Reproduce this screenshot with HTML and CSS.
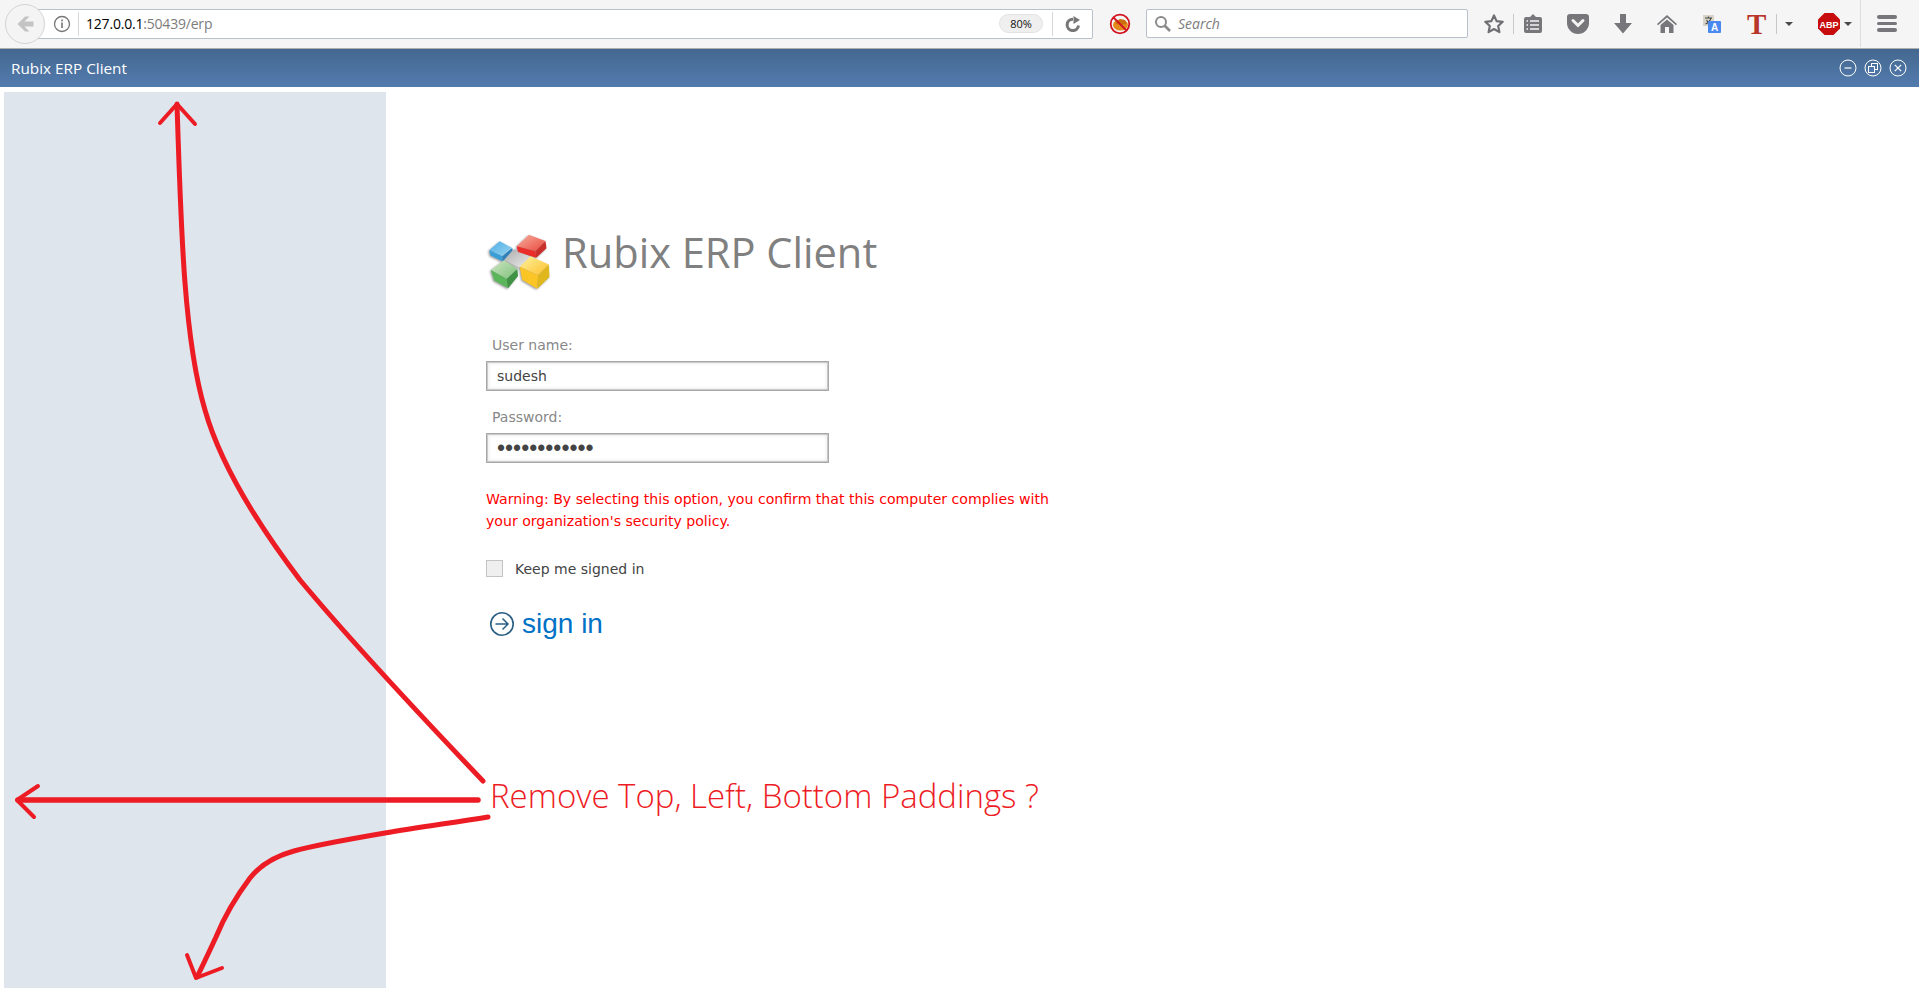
FILE: index.html
```html
<!DOCTYPE html>
<html lang="en">
<head>
  <meta charset="UTF-8" />
  <title>Rubix ERP Client</title>
  <link rel="stylesheet" href="styles.css">
</head>
<body>
  <!-- Browser toolbar -->
  <div class="toolbar">
    <div class="back-btn">
      <svg width="20" height="20" viewBox="0 0 20 20"><path d="M10 2.500 2.500 10l7.500 7.500h4.500l-5-5H18.500v-5H9.500l5-5z" fill="#c4c4c4"/></svg>
    </div>
    <div class="url-bar">
      <svg class="info-icon" width="18" height="18" viewBox="0 0 18 18"><circle cx="9" cy="9" r="7.500" fill="none" stroke="#777" stroke-width="1.300"/><rect x="8.200" y="7.500" width="1.600" height="5.500" fill="#777"/><rect x="8.200" y="4.500" width="1.600" height="1.800" fill="#777"/></svg>
      <span class="url-sep"></span>
      <span class="url-text">127.0.0.1<span class="url-dim">:50439/erp</span></span>
      <span class="zoom-pill">80%</span>
      <span class="url-sep reload-sep"></span>
      <svg class="reload-icon" width="16" height="16" viewBox="0 0 16 16"><path d="M13.500 9.500A5.700 5.700 0 1 1 8 3.200" fill="none" stroke="#777" stroke-width="3"/><path d="M8.500 0v8l6.500-4z" fill="#777"/></svg>
    </div>
    <svg class="noscript-icon" width="22" height="22" viewBox="0 0 22 22">
      <ellipse cx="11.500" cy="12" rx="7.500" ry="5.500" fill="#e58a1c"/>
      <path d="M6 10l5-4 5 1 2 4-7 1z" fill="#c96f10"/>
      <circle cx="11" cy="11" r="9.300" fill="none" stroke="#d0131f" stroke-width="1.800"/>
      <path d="M4.500 4.500l13 13" stroke="#d0131f" stroke-width="1.800"/>
    </svg>
    <div class="search-bar">
      <svg width="18" height="18" viewBox="0 0 18 18"><circle cx="7" cy="7" r="5" fill="none" stroke="#8a8a8a" stroke-width="2"/><path d="M10.500 10.500 16 16" stroke="#8a8a8a" stroke-width="2.600"/></svg>
      <span class="search-text">Search</span>
    </div>
    <svg class="star-icon" width="24" height="24" viewBox="0 0 24 24"><path d="M12 3.500l2.600 5.600 6.100.7-4.500 4.200 1.200 6.100L12 17l-5.400 3.100 1.200-6.100-4.500-4.200 6.100-.7z" fill="none" stroke="#6f6f73" stroke-width="2.200" stroke-linejoin="round"/></svg>
    <span class="tb-sep star-sep"></span>
    <div class="slot slot-first">
      <svg width="20" height="22" viewBox="0 0 20 22"><path d="M3 4h4l3-3 3 3h4a2 2 0 0 1 2 2v12a2 2 0 0 1-2 2H3a2 2 0 0 1-2-2V6a2 2 0 0 1 2-2z" fill="#77777b"/><path d="M7 8h9M7 12h9M7 16h9M3.500 8h1.500M3.500 12h1.500M3.500 16h1.500" stroke="#f5f5f5" stroke-width="1.500"/></svg>
    </div>
    <div class="slot">
      <svg width="22" height="20" viewBox="0 0 22 20"><path d="M3 0h16a3 3 0 0 1 3 3v6a11 11 0 0 1-22 0V3a3 3 0 0 1 3-3z" fill="#77777b"/><path d="M6 6.500l5 5 5-5" fill="none" stroke="#f5f5f5" stroke-width="3" stroke-linecap="round"/></svg>
    </div>
    <div class="slot">
      <svg width="18" height="20" viewBox="0 0 18 20"><path d="M6 0h6v9h6l-9 10.500L0 9h6z" fill="#77777b"/></svg>
    </div>
    <div class="slot">
      <svg width="20" height="18" viewBox="0 0 20 18"><path d="M10 0 0 9l1 1.200L10 2.500l9 7.700L20 9z" fill="#77777b"/><path d="M3.500 10 10 4.500l6.500 5.500v8H12v-6H8v6H3.500z" fill="#77777b"/></svg>
    </div>
    <div class="slot">
      <svg width="20" height="20" viewBox="0 0 20 20">
        <rect x="1" y="1" width="11" height="11" fill="#d8d4c8"/>
        <path d="M3 4h7M6.500 2.500v1.500M9 4c-1 3-3 5-5.500 6M4.500 6c1 2 2.500 3.500 4 4" fill="none" stroke="#444" stroke-width="1.100"/>
        <rect x="6" y="7" width="13" height="12" rx="1" fill="#4a8af0"/>
        <text class="translate-a" x="12.500" y="17" text-anchor="middle">A</text>
      </svg>
    </div>
    <div class="slot slot-t"><span class="t-glyph">T</span></div>
    <span class="tb-sep"></span>
    <div class="slot slot-drop"><span class="caret"></span></div>
    <svg class="abp-icon" width="22" height="22" viewBox="0 0 22 22"><path d="M6.500 0h9L22 6.500v9L15.500 22h-9L0 15.500v-9z" fill="#c70d0d"/><text class="abp-text" x="11" y="14.500" text-anchor="middle">ABP</text></svg>
    <div class="slot slot-caret"><span class="caret"></span></div>
    <span class="tb-sep tb-sep-tall"></span>
    <div class="hamburger"><span></span><span></span><span></span></div>
  </div>

  <!-- App title bar -->
  <div class="titlebar">
    <span class="titlebar-name">Rubix ERP Client</span>
    <div class="window-btns">
      <svg width="18" height="18" viewBox="0 0 18 18"><circle cx="9" cy="9" r="8" fill="none" stroke="#fff"/><path d="M5.500 9h7" stroke="#fff" stroke-width="1.200"/></svg>
      <svg width="18" height="18" viewBox="0 0 18 18"><circle cx="9" cy="9" r="8" fill="none" stroke="#fff"/><rect x="7.500" y="4.500" width="6" height="6" fill="none" stroke="#fff"/><rect x="4.500" y="7.500" width="6" height="6" fill="#4f76a8" stroke="#fff"/></svg>
      <svg width="18" height="18" viewBox="0 0 18 18"><circle cx="9" cy="9" r="8" fill="none" stroke="#fff"/><path d="M5.800 5.800l6.400 6.400M12.200 5.800l-6.400 6.400" stroke="#fff" stroke-width="1.200"/></svg>
    </div>
  </div>

  <main class="content">
    <aside class="sidebar"></aside>
    <section class="login">
      <div class="brand">
        <svg class="brand-logo" width="66" height="57" viewBox="24 20 192 172">
          <defs>
            <linearGradient id="redTop" x1="0" y1="0" x2="1" y2="1"><stop offset="0" stop-color="#f7b0a0"/><stop offset="1" stop-color="#e8483c"/></linearGradient>
            <linearGradient id="blueTop" x1="0" y1="0" x2="1" y2="1"><stop offset="0" stop-color="#4aaee6"/><stop offset="1" stop-color="#9cd4ee"/></linearGradient>
            <linearGradient id="grayTop" x1="0" y1="0" x2="1" y2="1"><stop offset="0" stop-color="#a9a9a9"/><stop offset="1" stop-color="#ededed"/></linearGradient>
            <linearGradient id="greenTop" x1="0" y1="0" x2="1" y2="1"><stop offset="0" stop-color="#cfe6c4"/><stop offset="1" stop-color="#7dc07a"/></linearGradient>
            <linearGradient id="yellowTop" x1="0" y1="0" x2="1" y2="1"><stop offset="0" stop-color="#fff3a0"/><stop offset="1" stop-color="#fdbe2a"/></linearGradient>
          </defs>
          <path d="M72 100l33-32 50 24-35 33z" fill="url(#grayTop)"/>
          <path d="M113 60l37-35 50 19-30 31z" fill="url(#redTop)"/>
          <path d="M113 60l57 15 2 20-55-18z" fill="#ea2f2b"/>
          <path d="M170 75l30-31 3 22-31 29z" fill="#c9302c"/>
          <path d="M30 72l32-27 38 20-30 25z" fill="url(#blueTop)"/>
          <path d="M30 72l40 18 1 16-37-18z" fill="#3a9fd8"/>
          <path d="M70 90l30-25 0 8-29 33z" fill="#2f7fb8"/>
          <path d="M35 132l40-30 40 27-32 30z" fill="url(#greenTop)"/>
          <path d="M35 132l48 27 4 28-42-24z" fill="#5bb55a"/>
          <path d="M83 159l32-30 2 21-30 37z" fill="#3f9144"/>
          <path d="M122 122l33-32 55 25-32 33z" fill="url(#yellowTop)"/>
          <path d="M122 122l56 26-3 40-45-26z" fill="#fcc526"/>
          <path d="M178 148l32-33 2 38-37 35z" fill="#e0b81e"/>
        </svg>
        <span class="brand-name">Rubix ERP Client</span>
      </div>

      <form class="login-form" autocomplete="off">
        <label class="field-label" for="user">User name:</label>
        <input class="field-input" type="text" id="user" value="sudesh" />
        <label class="field-label" for="pass">Password:</label>
        <input class="field-input field-password" type="password" id="pass" value="sudesh123456" />

        <p class="warning">Warning: By selecting this option, you confirm that this computer complies with your organization's security policy.</p>

        <label class="keep-row">
          <span class="fake-check"></span>
          Keep me signed in
        </label>

        <a class="sign-in" href="#">
          <svg width="24" height="24" viewBox="1 1 24 24"><circle cx="13" cy="13" r="11.200" fill="none" stroke="#2b5f85" stroke-width="1.600"/><path d="M6.500 13h12M13.500 7.500l5.500 5.500-5.500 5.500" fill="none" stroke="#2b5f85" stroke-width="1.500"/></svg>
          sign in
        </a>
      </form>
    </section>
  </main>

  <!-- Red annotation drawn over the page -->
  <svg class="annotation" width="1919" height="993" viewBox="0 0 1919 993">
    <g fill="none" stroke="#ed1c24" stroke-linecap="round" stroke-linejoin="round">
      <path stroke-width="5" d="M177 104C181 230 184 340 205 410C222 470 262 530 300 580C350 640 420 715 483 781"/>
      <path stroke-width="4" d="M160 123 177 104 195 124"/>
      <path stroke-width="5.500" d="M478 800H18"/>
      <path stroke-width="4" d="M38 786 17 800 34 817"/>
      <path stroke-width="5" d="M488 817C450 823 415 828 385 833C350 839 315 845 294 851C272 857 258 868 250 878C235 898 225 915 216 937C210 950 203 965 197 977"/>
      <path stroke-width="4" d="M187 955 196 978 222 968"/>
    </g>
  </svg>
  <div class="annotation-text">Remove Top, Left, Bottom Paddings ?</div>
</body>
</html>
```

FILE: styles.css
```css
html, body {
  margin: 0;
  height: 100%;
}
body {
  position: relative;
  width: 1919px;
  height: 993px;
  overflow: hidden;
  background: #fff;
  font-family: "DejaVu Sans", sans-serif;
  display: flex;
  flex-direction: column;
}

/* toolbar */
.toolbar {
  height: 49px;
  box-sizing: border-box;
  flex: none;
  display: flex;
  align-items: center;
  padding: 0 0 1px 5px;
  background: #f5f5f5;
  border-bottom: 1px solid #aeaeae;
}
.back-btn {
  width: 38px;
  height: 38px;
  margin-right: -13px;
  border: 1px solid #d4d4d4;
  border-radius: 50%;
  background: #f4f4f4;
  position: relative;
  z-index: 1;
  display: flex;
  align-items: center;
  justify-content: center;
  flex: none;
}
.url-bar {
  width: 1061px;
  height: 30px;
  box-sizing: border-box;
  flex: none;
  display: flex;
  align-items: center;
  background: #fff;
  border: 1px solid #b8c0cc;
  border-radius: 2px;
  padding-left: 20px;
}
.url-sep {
  width: 1px;
  height: 24px;
  margin-left: 7px;
  background: #d6d6d6;
}
.url-text {
  margin-left: 7px;
  font: 14px "Open Sans", sans-serif;
  letter-spacing: -0.2px;
  color: #000;
}
.url-dim { color: #7c7c7c; }
.zoom-pill {
  margin-left: auto;
  width: 42px;
  text-align: center;
  border-radius: 10px;
  background: #efefef;
  border: 1px solid #e2e2e2;
  font: 11px/17px "Open Sans", sans-serif;
  color: #111;
}
.reload-sep { margin-left: 9px; }
.reload-icon { margin: 0 11px 0 12px; flex: none; }
.noscript-icon { margin-left: 16px; flex: none; }
.search-bar {
  width: 322px;
  height: 29px;
  box-sizing: border-box;
  margin-left: 15px;
  flex: none;
  display: flex;
  align-items: center;
  gap: 6px;
  padding-left: 7px;
  background: #fff;
  border: 1px solid #b8c0cc;
  border-radius: 2px;
}
.search-text {
  font: italic 14px "Open Sans", sans-serif;
  color: #7c7c7c;
}
.star-icon { margin-left: 14px; flex: none; }
.tb-sep {
  width: 1px;
  height: 20px;
  background: #c8c8c8;
  flex: none;
}
.star-sep { margin-left: 7px; }
.slot {
  width: 44.750px;
  display: flex;
  align-items: center;
  justify-content: center;
  flex: none;
}
.slot-first { width: 38px; margin-right: 3.600px; }
.slot-t { width: 41px; padding-left: 3px; box-sizing: border-box; }
.t-glyph {
  font: bold 29px/26px "Liberation Serif", serif;
  color: #b8352a;
}
.slot-drop { width: 24px; }
.slot-caret { width: 14px; margin-left: 1px; }
.caret {
  width: 0;
  height: 0;
  border-left: 4.500px solid transparent;
  border-right: 4.500px solid transparent;
  border-top: 4.500px solid #4a4a4a;
}
.abp-icon { margin-left: 17px; flex: none; }
.abp-text {
  font: bold 9px "Liberation Sans", sans-serif;
  fill: #fff;
}
.translate-a {
  font: bold 10px "Liberation Sans", sans-serif;
  fill: #fff;
}
.tb-sep-tall {
  height: 47px;
  margin-left: 5px;
  background: #dedede;
}
.hamburger {
  width: 20px;
  margin-left: 16px;
  display: flex;
  flex-direction: column;
  gap: 3px;
}
.hamburger span {
  height: 3.500px;
  border-radius: 2px;
  background: #77777b;
}

/* title bar */
.titlebar {
  height: 38px;
  flex: none;
  display: flex;
  align-items: center;
  justify-content: space-between;
  padding: 0 12px 0 11px;
  background: linear-gradient(#44688f, #527bae);
}
.titlebar-name {
  font: 15.300px "Open Sans", sans-serif;
  color: #fff;
}
.window-btns {
  display: flex;
  gap: 7px;
}

/* page */
.content {
  flex: 1;
  display: flex;
  min-height: 0;
  padding: 5px 0 5px 4px;
}
.sidebar {
  width: 382px;
  flex: none;
  background: #dee5ed;
}
.login {
  padding: 141px 0 0 100px;
}
.brand {
  display: flex;
  align-items: center;
  gap: 10px;
  height: 57px;
}
.brand-logo { filter: drop-shadow(-1px 1px 1px #999); }
.brand-name {
  font: 41.600px "Open Sans", sans-serif;
  color: #808080;
  margin-bottom: 20px;
}
.login-form {
  width: 575px;
  margin-top: 46px;
}
.field-label {
  display: block;
  padding-left: 6px;
  font-size: 14px;
  line-height: 18px;
  color: #888;
}
.field-input {
  display: block;
  width: 343px;
  height: 30px;
  box-sizing: border-box;
  margin: 7px 0 17px;
  padding: 0 10px;
  border: 1px solid #a8a8a8;
  box-shadow: inset 0 0 0 1px #c8c8c8, inset 0 0 3px 2px #eee;
  font: 14px "DejaVu Sans", sans-serif;
  color: #444;
}
.field-password {
  font: 23px "Liberation Sans", sans-serif;
}
.warning {
  margin: 25px 0 0;
  font-size: 14.100px;
  line-height: 22px;
  color: #f00;
}
.keep-row {
  display: flex;
  align-items: center;
  gap: 12px;
  margin-top: 28px;
  font-size: 14px;
  color: #444;
}
.fake-check {
  width: 17px;
  height: 17px;
  box-sizing: border-box;
  border: 1px solid #c4c4c4;
  background: #efefef;
}
.sign-in {
  display: flex;
  align-items: center;
  gap: 8px;
  margin: 31px 0 0 4px;
  font: 28px "Liberation Sans", sans-serif;
  color: #0072c6;
  text-decoration: none;
}

/* annotation */
.annotation {
  position: absolute;
  left: 0;
  top: 0;
  pointer-events: none;
}
.annotation-text {
  position: absolute;
  left: 490px;
  top: 773px;
  font: 300 33px "Open Sans", sans-serif;
  color: #ed1c24;
  white-space: nowrap;
}
```
